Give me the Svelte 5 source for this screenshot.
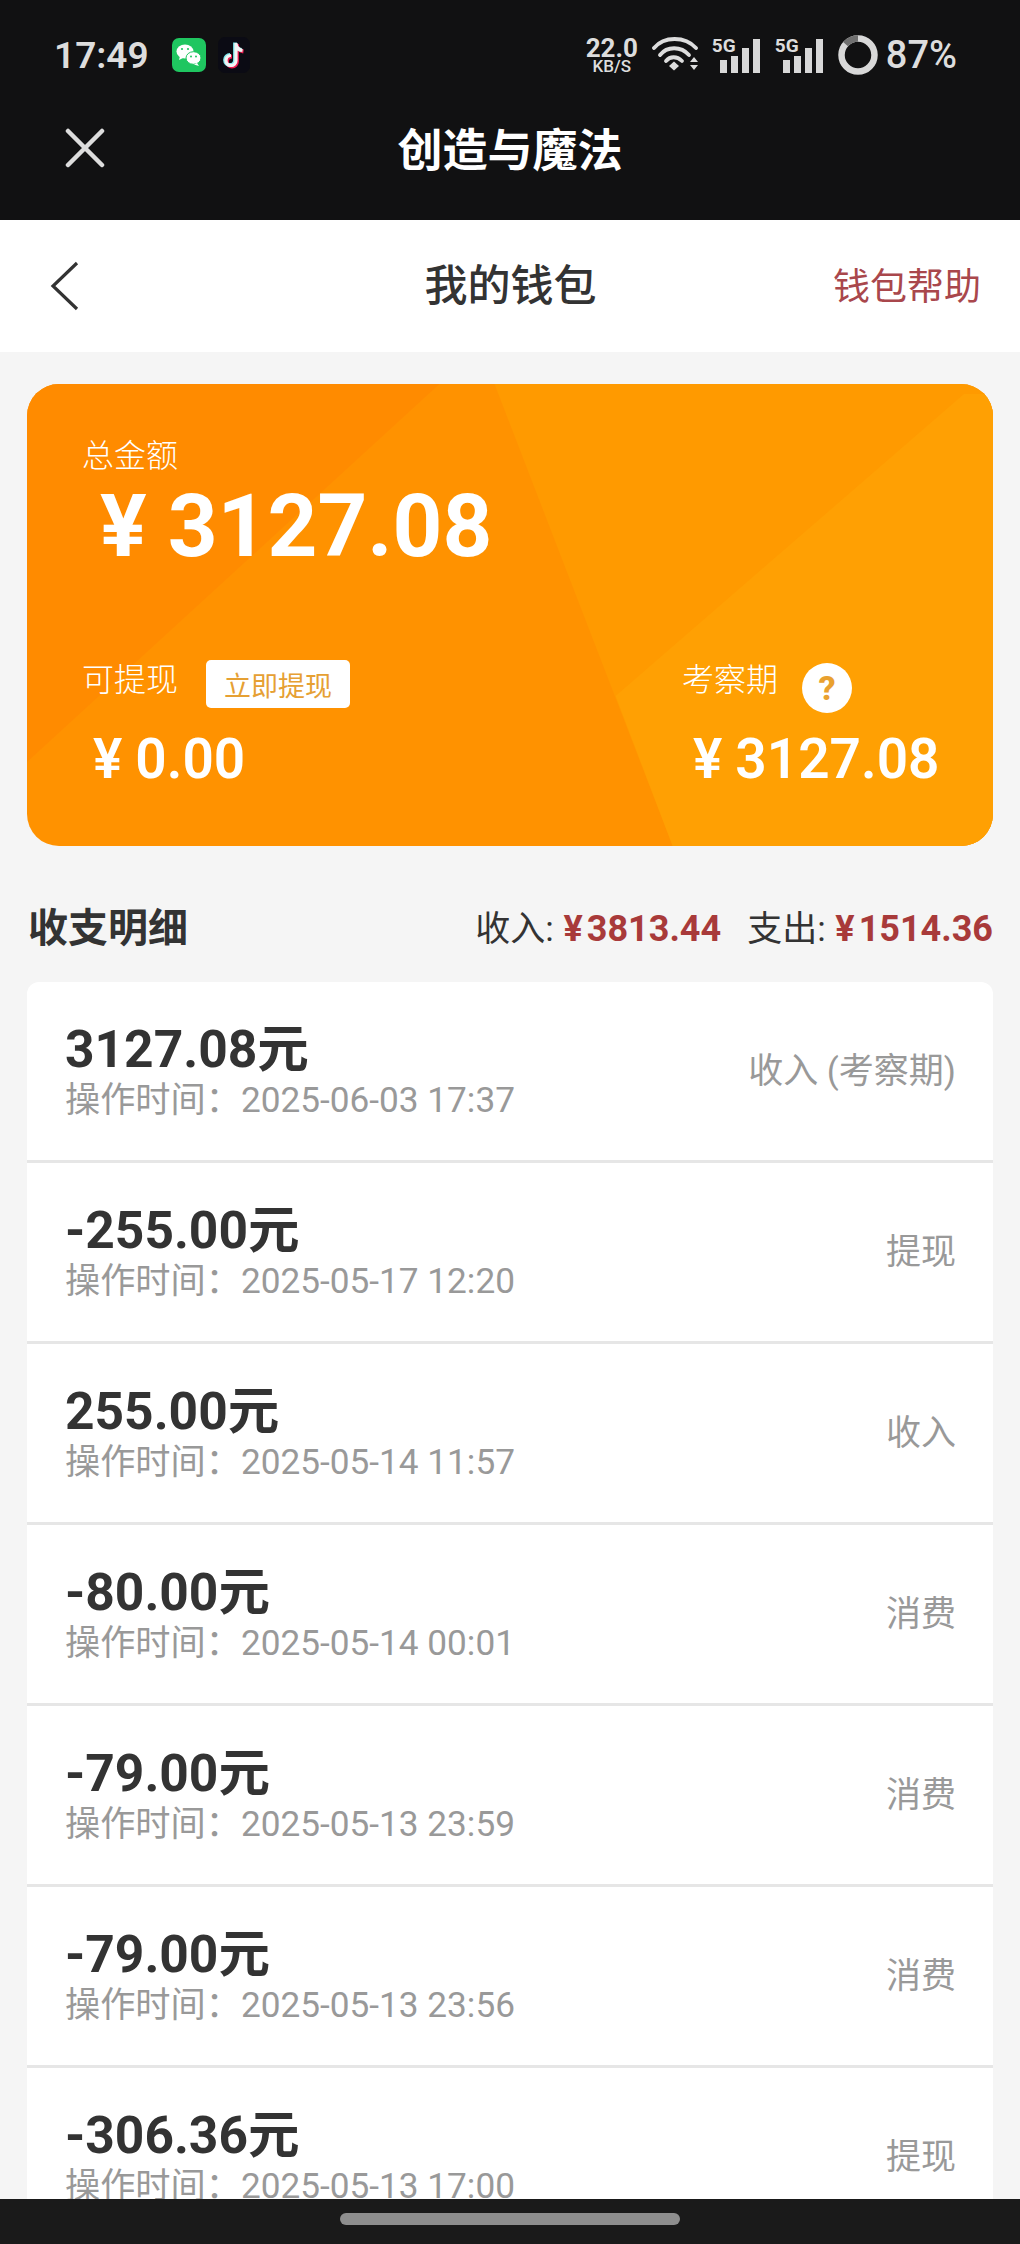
<script>
  const rows = [
    { amount: '3127.08', time: '2025-06-03 17:37', tag: '收入 (考察期)' },
    { amount: '-255.00', time: '2025-05-17 12:20', tag: '提现' },
    { amount: '255.00', time: '2025-05-14 11:57', tag: '收入' },
    { amount: '-80.00', time: '2025-05-14 00:01', tag: '消费' },
    { amount: '-79.00', time: '2025-05-13 23:59', tag: '消费' },
    { amount: '-79.00', time: '2025-05-13 23:56', tag: '消费' },
    { amount: '-306.36', time: '2025-05-13 17:00', tag: '提现' }
  ];
</script>

<div class="page">
  <header class="dark">
    <div class="status">
      <span class="clock">17:49</span>
      <svg class="wechat" viewBox="0 0 34 34" width="34" height="34" aria-hidden="true">
        <rect width="34" height="34" rx="7" fill="#1fc660" />
        <ellipse cx="13" cy="13.500" rx="8.500" ry="7" fill="#fff" />
        <path d="M8 18l-1 4 5-2.500z" fill="#fff" />
        <ellipse cx="21.500" cy="20" rx="7.500" ry="6.300" fill="#fff" stroke="#1fc660" stroke-width="1" />
        <path d="M25 25l2 3-5-1.500z" fill="#fff" />
        <circle cx="10" cy="11" r="1.100" fill="#1fc660" /><circle cx="16" cy="11" r="1.100" fill="#1fc660" />
        <circle cx="19" cy="18.500" r="1" fill="#1fc660" /><circle cx="24" cy="18.500" r="1" fill="#1fc660" />
      </svg>
      <svg class="tiktok" viewBox="0 0 32 36" width="32" height="36" aria-hidden="true">
        <rect width="32" height="36" rx="7" fill="#0b0b14" />
        <path d="M18 6v17.500a5 5 0 1 1-5-5M18 7c.5 3.500 3 6 6.500 6.500" fill="none" stroke="#ee1d52" stroke-width="3.800" transform="translate(1 1)" />
        <path d="M18 6v17.500a5 5 0 1 1-5-5M18 7c.5 3.500 3 6 6.500 6.500" fill="none" stroke="#7fe8ee" stroke-width="3.800" transform="translate(-1 -.5)" />
        <path d="M18 6v17.500a5 5 0 1 1-5-5M18 7c.5 3.500 3 6 6.500 6.500" fill="none" stroke="#f4f4f4" stroke-width="3.200" />
      </svg>
      <div class="right">
        <div class="speed"><b>22.0</b><small>KB/S</small></div>
        <svg class="wifi" viewBox="0 0 48 36" width="48" height="36" aria-hidden="true">
          <g fill="none" stroke="#ddd" stroke-width="3.800" stroke-linecap="round">
            <path d="M2 11C12 -1 33 -1 44 11" />
            <path d="M8 18C15 9 29 9 37 18" />
            <path d="M14 24C18 19 25 19 30 24" />
          </g>
          <path d="M17 29l5-4.500 5 4.500-5 4.500z" fill="#ddd" />
          <path d="M38 25l4-5 4 5zM38 28l4 5 4-5z" fill="#ddd" />
        </svg>
        {#each [0, 1] as s (s)}
          <div class="signal">
            <span class="fiveg">5G</span>
            <i class="b1"></i><i class="b2"></i><i class="b3"></i><i class="b4"></i>
          </div>
        {/each}
        <svg class="ring" viewBox="0 0 40 40" width="40" height="40" aria-hidden="true">
          <circle cx="20" cy="20" r="16.500" fill="none" stroke="#d8d8d8" stroke-width="6.500" />
          <path d="M20 3.500A16.500 16.500 0 0 0 7.500 9.200" fill="none" stroke="#707070" stroke-width="6.500" />
        </svg>
        <span class="pct">87%</span>
      </div>
    </div>
    <div class="titlebar">
      <svg class="close" viewBox="0 0 40 40" width="40" height="40" aria-hidden="true">
        <path d="M3 3l34 34M37 3L3 37" stroke="#ddd" stroke-width="4.500" stroke-linecap="round" />
      </svg>
      <h1>创造与魔法</h1>
      <span></span>
    </div>
  </header>

  <nav>
    <svg class="back" viewBox="0 0 30 50" width="30" height="50" aria-hidden="true">
      <path d="M27 2L3 25l24 23" fill="none" stroke="#333" stroke-width="3.200" />
    </svg>
    <h2>我的钱包</h2>
    <a href="#help">钱包帮助</a>
  </nav>

  <main>
    <section class="card">
      <svg class="facets" viewBox="0 0 965 462" preserveAspectRatio="none" aria-hidden="true">
        <rect width="965" height="462" fill="#ff9200" />
        <path d="M0 0H412L0 378z" fill="#ff8b00" />
        <path d="M467 0H965V462H645z" fill="#ff9a00" />
        <path d="M936 10L588 312 645 462H965V10z" fill="#ffa003" />
      </svg>
      <div class="content">
        <div class="label total-label">总金额</div>
        <div class="total"><span class="yen">¥</span>3127.08</div>
        <div class="split">
          <div>
            <div class="split-head">
              <span class="label up">可提现</span>
              <button type="button">立即提现</button>
            </div>
            <div class="sum"><span class="yen">¥</span>0.00</div>
          </div>
          <div>
            <div class="split-head gap">
              <span class="label up">考察期</span>
              <span class="help">?</span>
            </div>
            <div class="sum"><span class="yen">¥</span>3127.08</div>
          </div>
        </div>
      </div>
    </section>

    <div class="summary">
      <h3>收支明细</h3>
      <div class="totals">
        <span>收入: <b><span class="rmb">¥</span>3813.44</b></span>
        <span>支出: <b><span class="rmb">¥</span>1514.36</b></span>
      </div>
    </div>

    <ul>
      {#each rows as r (r.time)}
        <li>
          <div>
            <div class="amount">{r.amount}元</div>
            <div class="time">操作时间：<span>{r.time}</span></div>
          </div>
          <span class="tag">{r.tag}</span>
        </li>
      {/each}
    </ul>
  </main>

  <footer><span></span></footer>
</div>

<style>
  :global(body) {
    margin: 0;
    background: #f5f5f5;
  }
  .page {
    width: 1020px;
    height: 2244px;
    display: flex;
    flex-direction: column;
    overflow: hidden;
    font-family: Roboto, "Noto Sans CJK SC", sans-serif;
    color: #333;
  }
  .dark {
    background: #111112;
    height: 220px;
    flex: none;
    color: #ddd;
  }
  .status {
    height: 110px;
    display: flex;
    align-items: center;
    padding: 0 63px 0 54px;
    box-sizing: border-box;
  }
  .clock {
    font-size: 37px;
    font-weight: 600;
    width: 118px;
  }
  .wechat { margin-right: 12px; }
  .right {
    margin-left: auto;
    display: flex;
    align-items: center;
  }
  .speed {
    display: flex;
    flex-direction: column;
    align-items: center;
    line-height: 1;
    width: 54px;
    margin-right: 13px;
  }
  .speed b { font-size: 26px; font-weight: 700; line-height: 22px; }
  .speed small { font-size: 17px; font-weight: 500; line-height: 14px; }
  .wifi { margin-right: 12px; }
  .signal {
    position: relative;
    width: 48px;
    height: 34px;
    margin: 2px 15px 0 0;
    display: flex;
    align-items: flex-end;
    justify-content: flex-end;
    gap: 4px;
  }
  .fiveg {
    position: absolute;
    left: 0;
    top: -3px;
    font-size: 19px;
    font-weight: 700;
    line-height: 20px;
  }
  .signal i { background: #d8d8d8; width: 7px; display: block; }
  .b1 { height: 13px; }
  .b2 { height: 17px; }
  .b3 { height: 25px; }
  .b4 { height: 34px; }
  .ring { margin-right: 8px; }
  .pct { font-size: 38px; font-weight: 500; }
  .titlebar {
    height: 110px;
    display: grid;
    grid-template-columns: 1fr auto 1fr;
    align-items: center;
    padding: 0 65px 26px;
    box-sizing: border-box;
  }
  .close { margin-bottom: 8px; }
  h1 {
    margin: 0;
    font-size: 45px;
    font-weight: 700;
    color: #fff;
    line-height: 60px;
  }
  nav {
    height: 132px;
    flex: none;
    background: #fff;
    display: grid;
    grid-template-columns: 1fr auto 1fr;
    align-items: center;
    padding: 0 39px 0 40px;
    box-sizing: border-box;
  }
  .back { margin-left: 10px; }
  h2 {
    margin: 0;
    font-size: 43px;
    font-weight: 500;
    color: #333;
    line-height: 56px;
  }
  nav a {
    justify-self: end;
    font-size: 37px;
    color: #a9474c;
    text-decoration: none;
    margin-bottom: 4px;
  }
  main {
    flex: 1;
    min-height: 0;
    overflow: hidden;
    padding: 32px 27px 0 27px;
  }
  .card {
    position: relative;
    height: 462px;
    border-radius: 32px;
    overflow: hidden;
    color: #fff;
  }
  .facets {
    position: absolute;
    inset: 0;
    width: 100%;
    height: 100%;
  }
  .content {
    position: relative;
    padding: 50px 0 0 55px;
    box-sizing: border-box;
  }
  .label {
    font-size: 32px;
    line-height: 44px;
    font-weight: 300;
  }
  .label.up { margin-bottom: 8px; }
  .total {
    font-size: 87px;
    font-weight: 700;
    line-height: 96px;
    margin: 0 0 0 18px;
  }
  .yen {
    margin-right: 21px;
  }
  .split {
    display: grid;
    grid-template-columns: 600px 1fr;
    margin-top: 84px;
  }
  .split-head {
    display: flex;
    align-items: center;
    height: 52px;
    gap: 28px;
  }
  .split-head.gap { gap: 24px; }
  button {
    border: 0;
    background: #fff;
    color: #e6a033;
    font: inherit;
    font-size: 27px;
    width: 144px;
    height: 48px;
    padding: 0;
    border-radius: 5px;
  }
  .help {
    width: 50px;
    height: 50px;
    border-radius: 50%;
    background: #fff;
    color: #e9a12f;
    font-size: 34px;
    font-weight: 800;
    display: flex;
    align-items: center;
    justify-content: center;
    margin-top: 7px;
  }
  .sum {
    font-size: 55px;
    font-weight: 600;
    line-height: 62px;
    margin: 18px 0 0 11px;
  }
  .sum .yen { margin-right: 13px; }
  .summary {
    display: flex;
    justify-content: space-between;
    align-items: center;
    height: 54px;
    margin: 52px 0 0 1px;
  }
  h3 {
    margin: 0;
    font-size: 40px;
    font-weight: 700;
    color: #333;
  }
  .totals {
    display: flex;
    gap: 26px;
    font-size: 35px;
    color: #333;
  }
  .totals b { color: #a83a3a; font-weight: 700; font-size: 36px; margin-left: 1px; }
  .rmb { margin-right: 4px; }
  ul {
    list-style: none;
    margin: 30px 0 0;
    padding: 0;
    border-radius: 12px 12px 0 0;
    overflow: hidden;
  }
  li {
    height: 181px;
    box-sizing: border-box;
    background: #fff;
    border-bottom: 3px solid #e6e6e6;
    display: flex;
    align-items: center;
    justify-content: space-between;
    padding: 0 37px 0 38px;
  }
  .amount {
    font-size: 51.500px;
    font-weight: 700;
    line-height: 54px;
    color: #333;
    margin-top: 2px;
  }
  .time {
    font-size: 35.200px;
    line-height: 42px;
    color: #999;
    margin-top: 2px;
  }
  .tag {
    font-size: 35px;
    color: #999;
    margin-bottom: 7px;
  }
  footer {
    height: 45px;
    flex: none;
    background: #1a1a1a;
    display: flex;
    justify-content: center;
    padding-top: 14px;
    box-sizing: border-box;
  }
  footer span {
    width: 340px;
    height: 12px;
    border-radius: 6px;
    background: #8e8e8e;
  }
</style>
